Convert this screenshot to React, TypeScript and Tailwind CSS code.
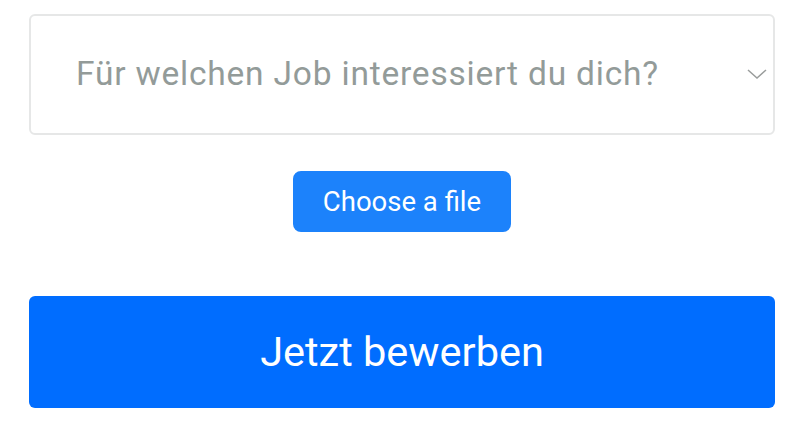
import React from "react";

export default function App() {
  return (
    <div className="min-h-screen bg-white pl-[29px] pr-[23px] pt-[14px] font-['Roboto',sans-serif]">
      {/* Job select */}
      <div className="relative">
        <select
          defaultValue=""
          className="h-[121px] w-full appearance-none rounded-[6px] border-2 border-[#e6e7e7] bg-white pl-[45px] pr-[60px] text-[33.5px] tracking-[0.8px] text-[#939b99] outline-none"
        >
          <option value="" disabled>
            Für welchen Job interessiert du dich?
          </option>
        </select>
        <svg
          className="pointer-events-none absolute right-[8px] top-[55px]"
          width="20"
          height="10"
          viewBox="0 0 20 10"
          fill="none"
        >
          <path d="M1 1l9 8 9-8" stroke="#9a9d9c" strokeWidth="1.5" />
        </svg>
      </div>

      {/* File upload */}
      <div className="mt-[36px] flex justify-center">
        <label className="flex h-[61px] w-[218px] cursor-pointer items-center justify-center rounded-[8px] bg-[#1c82fb] text-[27.5px] text-white">
          Choose a file
          <input type="file" className="hidden" />
        </label>
      </div>

      {/* Submit */}
      <button className="mt-[64px] flex h-[112px] w-full items-center justify-center rounded-[6px] bg-[#006dff] text-[41.5px] text-white">
        Jetzt bewerben
      </button>
    </div>
  );
}
